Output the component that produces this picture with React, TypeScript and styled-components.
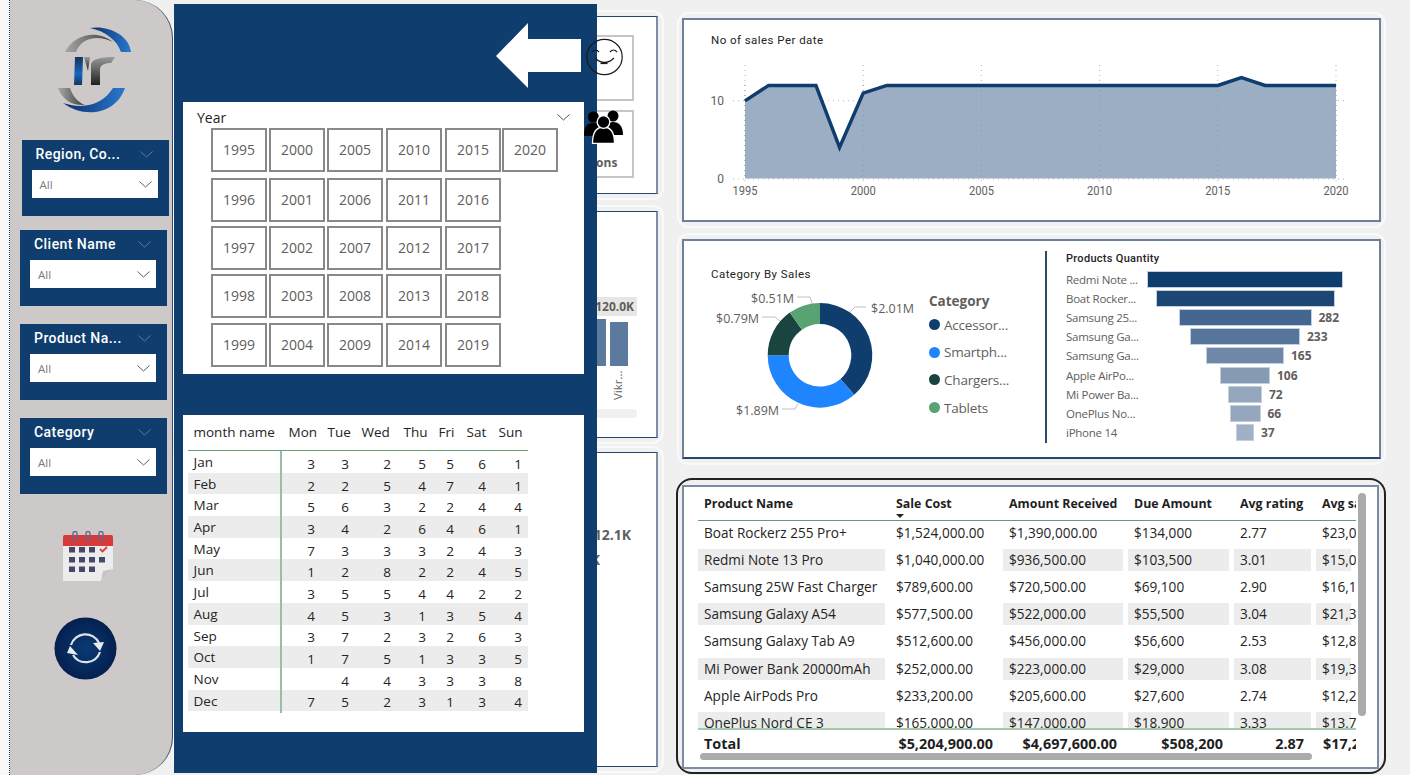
import React from 'react';
import styled, { createGlobalStyle } from 'styled-components';

const NAVY = '#0f3d6e';
const BODY_FONT = '"Open Sans", "Noto Sans", sans-serif';
const TITLE_FONT = 'Roboto, "Liberation Sans", sans-serif';

const GlobalStyle = createGlobalStyle`
  html, body { margin: 0; padding: 0; background: #f0f0f0; }
  * { box-sizing: border-box; }
`;

const Page = styled.div`
  position: relative;
  width: 1410px;
  height: 775px;
  display: flex;
  overflow: hidden;
  background: #f0f0f0;
  font-family: ${BODY_FONT};
`;

const Strip = styled.div`
  width: 10px;
  height: 100%;
  background: #f8f8f8;
  border-right: 1px dotted ${NAVY};
`;

/* left filter rail */
const Sidebar = styled.aside`
  width: 163px;
  height: 100%;
  display: flex;
  flex-direction: column;
  background: #cdc9c9;
  border-right: 1.5px solid #2d4a6d;
  border-radius: 0 38px 38px 0;
`;

const LogoWrap = styled.div`
  height: 140px;
  padding: 26px 0 0 47px;
`;

const Slicer = styled.div<{ $left: number; $gap: number }>`
  width: 147px;
  height: 76px;
  margin: 0 0 ${p => p.$gap}px ${p => p.$left}px;
  padding: 6px 10px 0 10px;
  background: ${NAVY};
`;

const SlicerHead = styled.div`
  display: flex;
  align-items: center;
  justify-content: space-between;
  height: 16px;
  padding: 0 6px 0 4px;
  margin-bottom: 8px;
  color: #fff;
  font: 500 14px ${TITLE_FONT};
  letter-spacing: 0.45px;
`;

const Dropdown = styled.div`
  display: flex;
  align-items: center;
  justify-content: space-between;
  width: 126px;
  height: 28px;
  padding: 0 6px 0 8px;
  background: #fff;
  color: #7a7a7a;
  font-size: 11.5px;
`;

const CalendarWrap = styled.div`
  margin: 37px 0 0 52px;
  height: 52px;
`;

const RefreshWrap = styled.div`
  margin: 34px 0 0 44px;
`;

/* middle column, mostly covered by the flyout */
const MiddleColumn = styled.div`
  width: 491px;
  padding: 10px 0 0 0;
  display: flex;
  flex-direction: column;
`;

const Frame = styled.div<{ $height: number; $gap?: number }>`
  height: ${p => p.$height}px;
  margin-bottom: ${p => p.$gap || 0}px;
  padding: 4px;
  border: 2px solid #fafafa;
  border-radius: 12px;
`;

const MidCard = styled.div`
  height: 100%;
  background: #fff;
  border: 1.5px solid #24466e;
  border-right: 2px solid #7b8fa8;
`;

const KpiCard = styled(MidCard)`
  display: flex;
  flex-direction: column;
  align-items: flex-end;
  gap: 9px;
  padding: 18px 22px 0 0;
`;

const KpiBox = styled.div<{ $height: number }>`
  width: 80px;
  height: ${p => p.$height}px;
  display: flex;
  align-items: flex-end;
  justify-content: center;
  padding-bottom: 5px;
  border: 2px solid #c8c6c4;
  color: #605e5c;
  font-size: 12px;
  font-weight: 700;
`;

const BarsCard = styled(MidCard)`
  display: flex;
  flex-direction: column;
  align-items: flex-end;
  padding: 85px 19px 0 0;
`;

const ValueTag = styled.div`
  height: 19px;
  padding: 0 3px 0 40px;
  background: #e6e6e6;
  color: #605e5c;
  font-size: 12px;
  font-weight: 700;
  line-height: 19px;
`;

const MiniBars = styled.div`
  display: flex;
  align-items: flex-end;
  gap: 4px;
  height: 50px;
  padding-right: 9px;
`;

const MiniBar = styled.div<{ $width: number; $height: number }>`
  width: ${p => p.$width}px;
  height: ${p => p.$height}px;
  background: #5c7a9e;
`;

const MiniLabels = styled.div`
  display: flex;
  justify-content: flex-end;
  gap: 16px;
  width: 100px;
  height: 38px;
  padding: 5px 12px 0 0;
  color: #605e5c;
  font-size: 11.5px;
`;

const MiniLabel = styled.span`
  writing-mode: vertical-rl;
  transform: rotate(180deg);
  height: 29px;
`;

const MiniTrack = styled.div`
  width: 300px;
  height: 9px;
  margin-top: 5px;
  background: #f0f0f0;
  border-radius: 4px;
`;

const TextCard = styled(MidCard)`
  display: flex;
  flex-direction: column;
  align-items: flex-end;
  gap: 6px;
  padding: 72px 25px 0 0;
  color: #605e5c;
  font-size: 14px;
  font-weight: 700;
`;

const ShiftedValue = styled.div`
  margin-right: 31px;
`;

/* right column */
const RightColumn = styled.div`
  width: 730px;
  padding: 12px 0 0 13px;
  display: flex;
  flex-direction: column;
`;

const RightFrame = styled.div<{ $height: number; $gap: number }>`
  width: 709px;
  height: ${p => p.$height}px;
  margin-bottom: ${p => p.$gap}px;
  padding: 4px 3px;
  border: 2px solid #fafafa;
  border-radius: 12px;
`;

const Card = styled.section`
  height: 100%;
  background: #fff;
  border: 2px solid #6c8099;
`;

const LineCard = styled(Card)`
  padding: 13px 0 0 0;
`;

const ChartTitle = styled.h3<{ $left?: number }>`
  margin: 0 0 0 ${p => p.$left ?? 27}px;
  height: 17px;
  color: #252423;
  font: 400 11.5px/15px ${TITLE_FONT};
  letter-spacing: 0.45px;
`;

const ChartSvg = styled.svg`
  display: block;
`;

const AxisText = styled.text`
  fill: #605e5c;
  font: 400 12px ${TITLE_FONT};
`;

const MixCard = styled(Card)`
  display: flex;
  padding-left: 16px;
  border-bottom-color: #24466e;
`;

const DonutBlock = styled.div`
  width: 345px;
  padding-top: 26px;
`;

const DonutRow = styled.div`
  display: flex;
  margin-top: 1px;
`;

const LeaderText = styled.text`
  fill: #605e5c;
  font: 400 12.5px ${BODY_FONT};
`;

const Legend = styled.div`
  margin: 6px 0 0 4px;
  color: #605e5c;
  font-size: 13.5px;
  letter-spacing: -0.2px;
`;

const LegendTitle = styled.div`
  height: 20px;
  margin-bottom: 0;
  font-weight: 700;
  font-size: 13.5px;
  line-height: 20px;
  letter-spacing: 0;
`;

const LegendItem = styled.div`
  display: flex;
  align-items: center;
  gap: 4px;
  height: 27.6px;
  white-space: nowrap;
`;

const LegendDot = styled.span<{ $color: string }>`
  width: 11px;
  height: 11px;
  border-radius: 50%;
  background: ${p => p.$color};
`;

const Divider = styled.div`
  width: 2px;
  height: 192px;
  margin-top: 10px;
  background: #2d4a6d;
`;

const FunnelBlock = styled.div`
  padding: 11px 0 0 19px;
`;

const FunnelTitle = styled.div`
  height: 14px;
  margin-bottom: 4px;
  color: #252423;
  font: 500 11px/14px ${TITLE_FONT};
  letter-spacing: 0.3px;
`;

const FunnelRow = styled.div`
  display: flex;
  align-items: center;
  height: 19.1px;
`;

const FunnelLabel = styled.div`
  width: 81px;
  color: #605e5c;
  font-size: 11.5px;
  letter-spacing: -0.25px;
  white-space: nowrap;
`;

const FunnelTrack = styled.div`
  width: 196px;
  display: flex;
  justify-content: center;
`;

const FunnelBar = styled.div<{ $color: string }>`
  position: relative;
  height: 17px;
  background: ${p => p.$color};
  border: 1px solid #c3cfdd;
`;

const FunnelValue = styled.span`
  position: absolute;
  left: 100%;
  top: -1px;
  margin-left: 8px;
  color: #605e5c;
  font-size: 12px;
  font-weight: 700;
  line-height: 18px;
`;

const TableFrame = styled.div`
  width: 710px;
  height: 296px;
  margin-left: -1px;
  padding: 5px 5px 3px 4px;
  border: 2px solid #222;
  border-radius: 16px;
`;

const TableCard = styled(Card)`
  position: relative;
  padding: 0 0 0 14px;
  border-color: #7a8ca3;
`;

const TableClip = styled.div`
  width: 658px;
  overflow: hidden;
`;

const TableRow = styled.div`
  display: grid;
  grid-template-columns: 192px 113px 125px 106px 82px 40px;
  white-space: nowrap;
`;

const HeadRow = styled(TableRow)`
  height: 34px;
  align-items: center;
  border-bottom: 1.5px solid #5f9f75;
`;

const HeadCell = styled.div`
  position: relative;
  padding-left: 6px;
  color: #1f1f1f;
  font-size: 12.4px;
  font-weight: 700;
`;

const SortMark = styled.span`
  position: absolute;
  left: 6px;
  top: 19px;
  width: 0;
  height: 0;
  border-left: 4px solid transparent;
  border-right: 4px solid transparent;
  border-top: 4px solid #252423;
`;

const RowsClip = styled.div`
  height: 207px;
  overflow: hidden;
`;

const BodyRow = styled(TableRow)`
  height: 27.2px;
  align-items: center;
  color: #252423;
  font-size: 13.6px;
  &:first-child { margin-top: -2px; }
`;

const BodyCell = styled.div<{ $striped: boolean; $plain?: boolean }>`
  height: 22px;
  margin-right: ${p => (p.$plain ? 0 : 5)}px;
  padding-left: 6px;
  line-height: 22px;
  background: ${p => (p.$striped && !p.$plain ? '#ececec' : 'transparent')};
`;

const TotalRow = styled(TableRow)`
  height: 25px;
  align-items: center;
  padding-top: 3px;
  border-top: 2px solid #a3c9ae;
  color: #1f1f1f;
  font-size: 14.4px;
  font-weight: 700;
`;

const TotalCell = styled.div<{ $pad?: number }>`
  padding-right: ${p => p.$pad ?? 11}px;
  text-align: right;
`;

const TotalName = styled.div`
  padding-left: 6px;
`;

const TotalClipped = styled.div`
  padding-left: 7px;
`;

const ScrollV = styled.div`
  position: absolute;
  left: 674px;
  top: 6px;
  width: 8px;
  height: 223px;
  background: #ababab;
  border-radius: 4px;
`;

const ScrollH = styled.div`
  position: absolute;
  left: 16px;
  top: 266px;
  width: 612px;
  height: 7px;
  background: #ababab;
  border-radius: 4px;
`;

/* flyout over the middle column */
const Flyout = styled.div`
  position: absolute;
  left: 174px;
  top: 4px;
  width: 423px;
  height: 769px;
  padding: 0 13px 0 9px;
  background: ${NAVY};
`;

const FlyoutTop = styled.div`
  height: 98px;
  padding: 19px 0 0 313px;
`;

const YearPanel = styled.div`
  height: 272px;
  padding: 5px 0 0 14px;
  background: #fff;
`;

const YearHead = styled.div`
  display: flex;
  align-items: center;
  justify-content: space-between;
  height: 21px;
  padding-right: 14px;
  color: #252423;
  font-size: 14px;
`;

const YearGrid = styled.div`
  display: grid;
  grid-auto-flow: column;
  grid-template-rows: 50px 48px 48px 49px 44px;
  grid-template-columns: 58px 58px 59px 59px 57px 56px;
  margin-left: 14px;
`;

const YearButton = styled.div`
  width: 56px;
  height: 44px;
  display: flex;
  align-items: center;
  justify-content: center;
  padding-bottom: 2px;
  border: 2px solid #8a8886;
  color: #605e5c;
  font-size: 14px;
`;

const MatrixPanel = styled.div`
  height: 317px;
  margin-top: 41px;
  padding: 6px 0 0 5px;
  background: #fff;
  color: #252423;
  font-size: 13.5px;
`;

const MatrixRow = styled.div`
  display: grid;
  grid-template-columns: 94px 39px 34px 42px 35px 28px 32px 36px;
  width: 340px;
`;

const MatrixHead = styled(MatrixRow)`
  height: 30px;
  align-items: center;
  padding-bottom: 8px;
  border-bottom: 1.5px solid #5fa373;
  white-space: nowrap;
`;

const MatrixHeadCell = styled.div<{ $first?: boolean }>`
  padding-left: ${p => (p.$first ? 5.5 : 6.5)}px;
`;

const MatrixBodyRow = styled(MatrixRow)<{ $striped: boolean }>`
  height: 21.7px;
  align-items: center;
  background: ${p => (p.$striped ? '#ececec' : 'transparent')};
`;

const MatrixName = styled.div`
  height: 100%;
  padding-left: 5.5px;
  line-height: 23.7px;
  border-right: 2px solid #98bfa4;
`;

const MatrixValue = styled.div`
  padding: 2px 6px 0 0;
  text-align: right;
`;

const OverIcon = styled.svg<{ $left: number; $top: number }>`
  position: absolute;
  left: ${p => p.$left}px;
  top: ${p => p.$top}px;
`;

const Chevron = ({ color = '#5f5f5f', size = 13 }: { color?: string; size?: number }) => (
  <svg width={size} height={7} viewBox="0 0 13 7" fill="none">
    <polyline points="0.5,0.5 6.5,6 12.5,0.5" stroke={color} strokeWidth="1" />
  </svg>
);

const Logo = () => (
  <svg width="78" height="90" viewBox="0 0 78 90">
    <defs>
      <linearGradient id="blueArc" x1="0" y1="0" x2="1" y2="0">
        <stop offset="0" stopColor="#0c2f6c" />
        <stop offset="1" stopColor="#2a78cf" />
      </linearGradient>
      <linearGradient id="greyArc" x1="0" y1="0" x2="1" y2="0">
        <stop offset="0" stopColor="#a8a8a8" />
        <stop offset="1" stopColor="#3c3c3c" />
      </linearGradient>
      <linearGradient id="letterI" x1="0" y1="0" x2="0" y2="1">
        <stop offset="0" stopColor="#17345e" />
        <stop offset="0.6" stopColor="#1566c0" />
        <stop offset="1" stopColor="#17345e" />
      </linearGradient>
      <linearGradient id="letterR" x1="0" y1="0" x2="0" y2="1">
        <stop offset="0" stopColor="#9a9a9a" />
        <stop offset="1" stopColor="#1f1f1f" />
      </linearGradient>
    </defs>
    <path d="M33 2 C50 -1 72 8 74 26 L64 26 C60 14 48 5 33 2Z" fill="url(#blueArc)" />
    <path d="M8 26 C16 10 38 2 56 16 C40 8 24 12 19 26Z" fill="url(#greyArc)" />
    <path d="M6 77 C26 92 58 90 68 62 L56 62 C46 78 28 84 6 77Z" fill="url(#blueArc)" />
    <path d="M1 62 L13 62 C16 72 24 78 28 79 C16 80 5 74 1 62Z" fill="url(#greyArc)" />
    <path d="M18 31 L26 31 L25 59 L17 59Z" fill="url(#letterI)" />
    <path d="M27 31 H33 L31 45Z" fill="url(#letterR)" />
    <path d="M34 38 C36 33 42 31 58 31 L54 37 C47 37 43 39 43 44 V59 H34Z" fill="url(#letterR)" />
  </svg>
);

const CalendarIcon = () => (
  <svg width="52" height="52" viewBox="0 0 52 52">
    <path d="M1 5 H51 V38 L39 50 H1Z" fill="#ececec" />
    <path d="M1 6 a2 2 0 0 1 2 -2 H49 a2 2 0 0 1 2 2 V15 H1Z" fill="#d83a3a" />
    <path d="M39 50 L51 38 L41 40Z" fill="#c9c3c3" />
    {[11, 24, 37].map(x => (
      <rect key={x} x={x} y="0.5" width="4" height="9" rx="2" fill="none" stroke="#62628a" strokeWidth="1.3" />
    ))}
    {[7, 17, 27].map(x => (
      <rect key={x} x={x} y="16" width="6" height="5.5" fill="#47476a" />
    ))}
    <polyline points="38,18 40.5,20.5 45,16" fill="none" stroke="#d83a3a" strokeWidth="1.8" />
    {[7, 17, 27, 37].map(x => (
      <rect key={x} x={x} y="26" width="6" height="5.5" fill="#47476a" />
    ))}
    {[7, 17, 27].map(x => (
      <rect key={x} x={x} y="35.5" width="6" height="5.5" fill="#47476a" />
    ))}
  </svg>
);

const RefreshButton = () => (
  <svg width="63" height="63" viewBox="0 0 63 63">
    <defs>
      <radialGradient id="refreshFill">
        <stop offset="0" stopColor="#0a3a74" />
        <stop offset="1" stopColor="#04204f" />
      </radialGradient>
    </defs>
    <circle cx="31.5" cy="31.5" r="31" fill="url(#refreshFill)" />
    <path d="M17 28 A15 15 0 0 1 45 26" fill="none" stroke="#dfe3ea" strokeWidth="2.2" />
    <path d="M46 35 A15 15 0 0 1 19 38" fill="none" stroke="#dfe3ea" strokeWidth="2.2" />
    <polygon points="39,26 50,25 46,34" fill="#e8ebf0" />
    <polygon points="13,36 24,38 16,29" fill="#e8ebf0" />
  </svg>
);

const BackArrow = () => (
  <svg width="85" height="65" viewBox="0 0 85 65" style={{ display: 'block' }}>
    <polygon points="0,33 32,0 32,16 85,16 85,49 32,49 32,65" fill="#fff" />
  </svg>
);

const years = Array.from({ length: 26 }, (_, i) => 1995 + i);

const matrix: [string, string[]][] = [
  ['Jan', ['3', '3', '2', '5', '5', '6', '1']],
  ['Feb', ['2', '2', '5', '4', '7', '4', '1']],
  ['Mar', ['5', '6', '3', '2', '2', '4', '4']],
  ['Apr', ['3', '4', '2', '6', '4', '6', '1']],
  ['May', ['7', '3', '3', '3', '2', '4', '3']],
  ['Jun', ['1', '2', '8', '2', '2', '4', '5']],
  ['Jul', ['3', '5', '5', '4', '4', '2', '2']],
  ['Aug', ['4', '5', '3', '1', '3', '5', '4']],
  ['Sep', ['3', '7', '2', '3', '2', '6', '3']],
  ['Oct', ['1', '7', '5', '1', '3', '3', '5']],
  ['Nov', ['', '4', '4', '3', '3', '3', '8']],
  ['Dec', ['7', '5', '2', '3', '1', '3', '4']],
];

const salesSeries = [10, 12, 12, 12, 4, 11, 12, 12, 12, 12, 12, 12, 12, 12, 12, 12, 12, 12, 12, 12, 12, 13, 12, 12, 12, 12];
const xAt = (i: number) => 745 + i * 23.64;
const yAt = (v: number) => 178.5 - v * 7.76;
const linePoints = salesSeries.map((v, i) => `${xAt(i)},${yAt(v)}`).join(' ');

const donutSlices = [
  { value: 2.01, color: NAVY },
  { value: 1.89, color: '#1f85ff' },
  { value: 0.79, color: '#1a4440' },
  { value: 0.51, color: '#59a271' },
];

function donutPath(start: number, end: number) {
  const cx = 820;
  const cy = 355.3;
  const R = 52.3;
  const r = 31.3;
  const pt = (a: number, rad: number) => `${cx + rad * Math.sin(a)} ${cy - rad * Math.cos(a)}`;
  const large = end - start > Math.PI ? 1 : 0;
  return `M${pt(start, R)} A${R} ${R} 0 ${large} 1 ${pt(end, R)} L${pt(end, r)} A${r} ${r} 0 ${large} 0 ${pt(start, r)}Z`;
}

const donutTotal = donutSlices.reduce((s, d) => s + d.value, 0);
let donutAngle = 0;
const donutArcs = donutSlices.map(d => {
  const start = donutAngle;
  donutAngle += (d.value / donutTotal) * Math.PI * 2;
  return { d: donutPath(start, donutAngle), color: d.color };
});

const funnel = [
  { name: 'Redmi Note ...', width: 196, color: NAVY },
  { name: 'Boat Rocker...', width: 179, color: '#1c4775' },
  { name: 'Samsung 25...', width: 133, color: '#446690', value: 282 },
  { name: 'Samsung Ga...', width: 110, color: '#56759a', value: 233 },
  { name: 'Samsung Ga...', width: 78, color: '#7088a8', value: 165 },
  { name: 'Apple AirPo...', width: 50, color: '#869ab4', value: 106 },
  { name: 'Mi Power Ba...', width: 34, color: '#94a7bf', value: 72 },
  { name: 'OnePlus No...', width: 31, color: '#94a7bf', value: 66 },
  { name: 'iPhone 14', width: 18, color: '#a0b1c6', value: 37 },
];

const products = [
  ['Boat Rockerz 255 Pro+', '$1,524,000.00', '$1,390,000.00', '$134,000', '2.77', '$23,091'],
  ['Redmi Note 13 Pro', '$1,040,000.00', '$936,500.00', '$103,500', '3.01', '$15,072'],
  ['Samsung 25W Fast Charger', '$789,600.00', '$720,500.00', '$69,100', '2.90', '$16,118'],
  ['Samsung Galaxy A54', '$577,500.00', '$522,000.00', '$55,500', '3.04', '$21,389'],
  ['Samsung Galaxy Tab A9', '$512,600.00', '$456,000.00', '$56,600', '2.53', '$12,815'],
  ['Mi Power Bank 20000mAh', '$252,000.00', '$223,000.00', '$29,000', '3.08', '$19,385'],
  ['Apple AirPods Pro', '$233,200.00', '$205,600.00', '$27,600', '2.74', '$12,267'],
  ['OnePlus Nord CE 3', '$165,000.00', '$147,000.00', '$18,900', '3.33', '$13,750'],
];

const App = () => {
  return (
    <Page>
      <GlobalStyle />
      <Strip />
      <Sidebar>
        <LogoWrap>
          <Logo />
        </LogoWrap>
        <Slicer $left={11.5} $gap={14}>
          <SlicerHead>Region, Co...<Chevron color="#5e7a9a" /></SlicerHead>
          <Dropdown>All<Chevron /></Dropdown>
        </Slicer>
        <Slicer $left={10} $gap={18}>
          <SlicerHead>Client Name<Chevron color="#5e7a9a" /></SlicerHead>
          <Dropdown>All<Chevron /></Dropdown>
        </Slicer>
        <Slicer $left={10} $gap={18}>
          <SlicerHead>Product Na...<Chevron color="#5e7a9a" /></SlicerHead>
          <Dropdown>All<Chevron /></Dropdown>
        </Slicer>
        <Slicer $left={10} $gap={0}>
          <SlicerHead>Category<Chevron color="#5e7a9a" /></SlicerHead>
          <Dropdown>All<Chevron /></Dropdown>
        </Slicer>
        <CalendarWrap>
          <CalendarIcon />
        </CalendarWrap>
        <RefreshWrap>
          <RefreshButton />
        </RefreshWrap>
      </Sidebar>

      <MiddleColumn>
        <Frame $height={190} $gap={5}>
          <KpiCard>
            <KpiBox $height={66} />
            <KpiBox $height={68}>Regions</KpiBox>
          </KpiCard>
        </Frame>
        <Frame $height={239} $gap={2}>
          <BarsCard>
            <ValueTag>120.0K</ValueTag>
            <MiniBars>
              <MiniBar $width={34} $height={47} />
              <MiniBar $width={18} $height={44} />
            </MiniBars>
            <MiniLabels>
              <MiniLabel>Ira...</MiniLabel>
              <MiniLabel>Vikr...</MiniLabel>
            </MiniLabels>
            <MiniTrack />
          </BarsCard>
        </Frame>
        <Frame $height={327}>
          <TextCard>
            <div>12.1K</div>
            <ShiftedValue>8.4K</ShiftedValue>
          </TextCard>
        </Frame>
      </MiddleColumn>

      <RightColumn>
        <RightFrame $height={216} $gap={5}>
          <LineCard>
            <ChartTitle>No of sales Per date</ChartTitle>
            <ChartSvg width="696" height="170" viewBox="684 50 696 170">
              {[0, 5, 10, 15, 20, 25].map(i => (
                <line key={i} x1={xAt(i)} x2={xAt(i)} y1="65" y2="182" stroke="#b5b5b5" strokeDasharray="1 4" />
              ))}
              <polygon points={`745,178.5 ${linePoints} 1336,178.5`} fill="#9caec4" />
              {[0, 5, 10, 15, 20, 25].map(i => (
                <line key={i} x1={xAt(i)} x2={xAt(i)} y1="85" y2="178" stroke="#8b9bb0" strokeDasharray="1 4" />
              ))}
              <line x1="733" x2="1344" y1="100.7" y2="100.7" stroke="#b5b5b5" strokeDasharray="1 4" />
              <line x1="733" x2="1344" y1="179" y2="179" stroke="#b5b5b5" strokeDasharray="1 4" />
              <polyline points={linePoints} fill="none" stroke={NAVY} strokeWidth="3.5" />
              <AxisText x="724" y="105" textAnchor="end">10</AxisText>
              <AxisText x="724" y="183" textAnchor="end">0</AxisText>
              {[0, 5, 10, 15, 20, 25].map(i => (
                <AxisText key={i} x={xAt(i)} y="195" textAnchor="middle" textLength="25" lengthAdjust="spacingAndGlyphs">
                  {1995 + i}
                </AxisText>
              ))}
            </ChartSvg>
          </LineCard>
        </RightFrame>

        <RightFrame $height={232} $gap={13}>
          <MixCard>
            <DonutBlock>
              <ChartTitle $left={11}>Category By Sales</ChartTitle>
              <DonutRow>
                <ChartSvg width="225" height="145" viewBox="700 285 225 145">
                  {donutArcs.map(a => (
                    <path key={a.color} d={a.d} fill={a.color} />
                  ))}
                  <polyline points="850,312 855,307 866,307" fill="none" stroke="#c0c0c0" />
                  <polyline points="797,297 810,297 812,303" fill="none" stroke="#c0c0c0" />
                  <polyline points="762,317 775,317 780,321" fill="none" stroke="#c0c0c0" />
                  <polyline points="782,409 795,409 798,404" fill="none" stroke="#c0c0c0" />
                  <LeaderText x="871" y="313">$2.01M</LeaderText>
                  <LeaderText x="751" y="303">$0.51M</LeaderText>
                  <LeaderText x="716" y="323">$0.79M</LeaderText>
                  <LeaderText x="736" y="415">$1.89M</LeaderText>
                </ChartSvg>
                <Legend>
                  <LegendTitle>Category</LegendTitle>
                  <LegendItem><LegendDot $color={NAVY} />Accessor...</LegendItem>
                  <LegendItem><LegendDot $color="#1f85ff" />Smartph...</LegendItem>
                  <LegendItem><LegendDot $color="#1a4440" />Chargers...</LegendItem>
                  <LegendItem><LegendDot $color="#59a271" />Tablets</LegendItem>
                </Legend>
              </DonutRow>
            </DonutBlock>
            <Divider />
            <FunnelBlock>
              <FunnelTitle>Products Quantity</FunnelTitle>
              {funnel.map((f, i) => (
                <FunnelRow key={i}>
                  <FunnelLabel>{f.name}</FunnelLabel>
                  <FunnelTrack>
                    <FunnelBar $color={f.color} style={{ width: f.width }}>
                      {f.value && <FunnelValue>{f.value}</FunnelValue>}
                    </FunnelBar>
                  </FunnelTrack>
                </FunnelRow>
              ))}
            </FunnelBlock>
          </MixCard>
        </RightFrame>

        <TableFrame>
          <TableCard>
            <TableClip>
              <HeadRow>
                <HeadCell>Product Name</HeadCell>
                <HeadCell>Sale Cost<SortMark /></HeadCell>
                <HeadCell>Amount Received</HeadCell>
                <HeadCell>Due Amount</HeadCell>
                <HeadCell>Avg rating</HeadCell>
                <HeadCell>Avg sales</HeadCell>
              </HeadRow>
              <RowsClip>
                {products.map((row, r) => (
                  <BodyRow key={row[0]}>
                    {row.map((cell, c) => (
                      <BodyCell key={c} $striped={r % 2 === 1} $plain={c === 1}>{cell}</BodyCell>
                    ))}
                  </BodyRow>
                ))}
              </RowsClip>
              <TotalRow>
                <TotalName>Total</TotalName>
                <TotalCell $pad={10}>$5,204,900.00</TotalCell>
                <TotalCell>$4,697,600.00</TotalCell>
                <TotalCell>$508,200</TotalCell>
                <TotalCell $pad={12}>2.87</TotalCell>
                <TotalClipped>$17,285</TotalClipped>
              </TotalRow>
            </TableClip>
            <ScrollV />
            <ScrollH />
          </TableCard>
        </TableFrame>
      </RightColumn>

      <Flyout>
        <FlyoutTop>
          <BackArrow />
        </FlyoutTop>
        <YearPanel>
          <YearHead>Year<Chevron color="#44546a" /></YearHead>
          <YearGrid>
            {years.map(y => (
              <YearButton key={y}>{y}</YearButton>
            ))}
          </YearGrid>
        </YearPanel>
        <MatrixPanel>
          <MatrixHead>
            <MatrixHeadCell $first>month name</MatrixHeadCell>
            {['Mon', 'Tue', 'Wed', 'Thu', 'Fri', 'Sat', 'Sun'].map(d => (
              <MatrixHeadCell key={d}>{d}</MatrixHeadCell>
            ))}
          </MatrixHead>
          {matrix.map(([month, values], i) => (
            <MatrixBodyRow key={month} $striped={i % 2 === 1}>
              <MatrixName>{month}</MatrixName>
              {values.map((v, c) => (
                <MatrixValue key={c}>{v}</MatrixValue>
              ))}
            </MatrixBodyRow>
          ))}
        </MatrixPanel>
      </Flyout>

      <OverIcon $left={585} $top={38} width="40" height="40" viewBox="0 0 40 40" fill="none" stroke="#1a1a1a" strokeWidth="1.2">
        <circle cx="19.5" cy="19" r="17.7" />
        <path d="M7 14 q3.5 -4 7 0" />
        <path d="M25 14 q3.5 -4 7 0" />
        <path d="M10 20 q9.5 9 19 0" />
        <path d="M15.5 25.5 h7" />
      </OverIcon>
      <OverIcon $left={584} $top={110} width="40" height="34" viewBox="0 0 40 34" fill="#000">
        <circle cx="9.3" cy="7" r="5.5" />
        <circle cx="29" cy="6" r="5.5" />
        <path d="M0 26 C0 16 3 13 9 13 C15 13 19 16 19 26Z" />
        <path d="M20 25 C20 15 23 12 29 12 C35 12 39 16 39 25Z" />
        <path d="M8.5 33.5 C8.5 22 12 17 19.5 17 C27 17 30.5 22 30.5 33.5Z" stroke="#fff" strokeWidth="1.3" />
        <circle cx="19.5" cy="12" r="6.3" stroke="#fff" strokeWidth="1.3" />
      </OverIcon>
    </Page>
  );
};

export default App;
